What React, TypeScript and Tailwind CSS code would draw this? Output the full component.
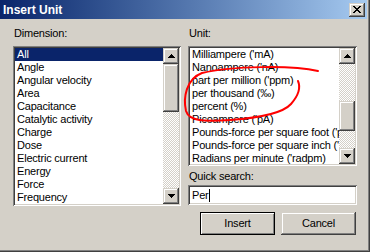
import React from 'react'

const dimensions = [
  'All',
  'Angle',
  'Angular velocity',
  'Area',
  'Capacitance',
  'Catalytic activity',
  'Charge',
  'Dose',
  'Electric current',
  'Energy',
  'Force',
  'Frequency',
]

const units = [
  "Milliampere ('mA)",
  "Nanoampere ('nA)",
  "part per million ('ppm)",
  'per thousand (‰)',
  'percent (%)',
  "Picoampere ('pA)",
  "Pounds-force per square foot ('psf)",
  "Pounds-force per square inch ('psi)",
  "Radians per minute ('radpm)",
]

const raised = 'shadow-[inset_-1px_-1px_#404040,inset_1px_1px_#d4d0c8,inset_-2px_-2px_#808080,inset_2px_2px_#ffffff]'
const sunken = 'shadow-[inset_1px_1px_#808080,inset_-1px_-1px_#ffffff,inset_2px_2px_#404040,inset_-2px_-2px_#d4d0c8]'

function Arrow({ down }: { down?: boolean }) {
  return (
    <svg width="7" height="4" viewBox="0 0 7 4" shapeRendering="crispEdges">
      <path
        fill="#000"
        d={down ? 'M0 0h7v1H6v1H5v1H4v1H3V3H2V2H1V1H0z' : 'M3 0h1v1h1v1h1v1h1v1H0V3h1V2h1V1h1z'}
      />
    </svg>
  )
}

function ScrollBtn({ down }: { down?: boolean }) {
  return (
    <div className={`h-[16px] w-[16px] shrink-0 bg-[#d4d0c8] flex items-center justify-center ${raised}`}>
      <Arrow down={down} />
    </div>
  )
}

function Track({ h }: { h: number }) {
  // dithered classic scrollbar track
  return (
    <div
      className="w-[16px] shrink-0 bg-[repeating-conic-gradient(#ffffff_0_25%,#d4d0c8_0_50%)] bg-[length:2px_2px]"
      style={{ height: h }}
    />
  )
}

function Thumb({ h }: { h: number }) {
  return <div className={`w-[16px] shrink-0 bg-[#d4d0c8] ${raised}`} style={{ height: h }} />
}

export default function App() {
  return (
    <div className="relative w-[370px] h-[252px] overflow-hidden bg-[#d4d0c8] flex flex-col text-[11px] tracking-[-0.2px] text-black font-['Liberation_Sans',Arial,sans-serif] shadow-[inset_-1px_-1px_#404040,inset_-2px_-2px_#808080]">
      {/* Title bar */}
      <div className="h-[19px] mr-[3px] shrink-0 flex items-center justify-between pl-[3px] pr-[2px] bg-gradient-to-r from-[#0a246a] to-[#a6caf0]">
        <span className="text-white font-bold text-[12px] tracking-normal leading-none">Insert Unit</span>
        <div className={`w-[16px] h-[14px] bg-[#d4d0c8] flex items-center justify-center ${raised}`}>
          <svg width="8" height="7" viewBox="0 0 8 7" shapeRendering="crispEdges">
            <path
              fill="#000"
              d="M0 0h2v1h1v1h2V1h1V0h2v1H7v1H6v1H5v1h1v1h1v1h1v1H6V6H5V5H3v1H2v1H0V6h1V5h1V4h1V3H2V2H1V1H0z"
            />
          </svg>
        </div>
      </div>

      <div className="flex gap-[7px] pl-[13px] pt-[8px]">
        {/* Dimension */}
        <div className="w-[168px] flex flex-col">
          <div className="h-[13px] leading-[13px] pl-[1px] mb-[6px]">Dimension:</div>
          <div className={`h-[160px] p-[2px] bg-white flex ${sunken}`}>
            <div className="flex-1 overflow-hidden">
              {dimensions.map((d, i) => (
                <div
                  key={d}
                  className={`h-[13px] leading-[13px] pl-[2px] whitespace-nowrap ${i === 0 ? 'bg-[#0a246a] text-white' : ''}`}
                >
                  {d}
                </div>
              ))}
            </div>
            <div className="flex flex-col">
              <ScrollBtn />
              <Thumb h={48} />
              <Track h={76} />
              <ScrollBtn down />
            </div>
          </div>
        </div>

        {/* Unit */}
        <div className="w-[169px] flex flex-col">
          <div className="h-[13px] leading-[13px] pl-[1px] mb-[6px]">Unit:</div>
          <div className={`h-[120px] p-[2px] bg-white flex ${sunken}`}>
            <div className="flex-1 overflow-hidden">
              {units.map((u) => (
                <div key={u} className="h-[13px] leading-[13px] pl-[2px] whitespace-nowrap">
                  {u}
                </div>
              ))}
            </div>
            <div className="flex flex-col">
              <ScrollBtn />
              <Track h={37} />
              <Thumb h={30} />
              <Track h={17} />
              <ScrollBtn down />
            </div>
          </div>

          <div className="h-[13px] leading-[13px] pl-[1px] mt-[4px]">Quick search:</div>
          <div className={`h-[20px] mt-[2px] bg-white flex items-center pl-[4px] ${sunken}`}>
            <span className="leading-[13px]">Per</span>
            <span className="w-[1px] h-[13px] bg-black" />
          </div>

          <div className="flex justify-end gap-[6px] mt-[7px] pr-[1px]">
            <button className="w-[75px] h-[23px] border border-black bg-[#d4d0c8] shadow-[inset_1px_1px_#ffffff,inset_-1px_-1px_#808080] flex items-center justify-center">
              Insert
            </button>
            <button className={`w-[75px] h-[23px] bg-[#d4d0c8] flex items-center justify-center ${raised}`}>
              Cancel
            </button>
          </div>
        </div>
      </div>

      {/* red hand-drawn annotation */}
      <svg className="absolute inset-0 pointer-events-none" width="370" height="252" viewBox="0 0 370 252">
        <path
          d="M318 71 C 292 65, 232 66, 202 73 C 186 79, 183 98, 186 111 C 189 121, 204 122, 230 120 C 258 118, 282 114, 291 104 C 298 96, 301 88, 298 81"
          fill="none"
          stroke="#ff0000"
          strokeWidth="2"
          strokeLinecap="round"
        />
      </svg>
    </div>
  )
}
